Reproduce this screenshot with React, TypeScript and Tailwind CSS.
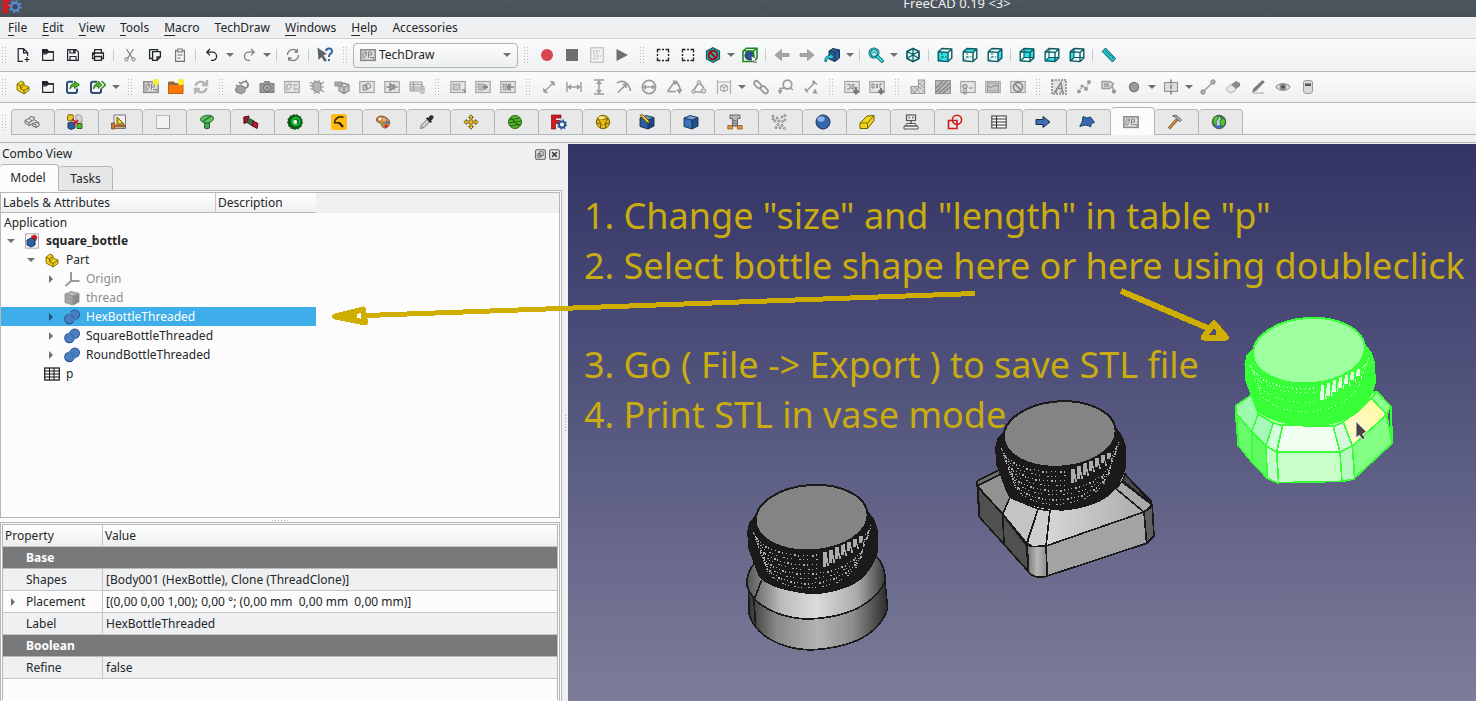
import { ReactNode } from "react";

const DARK = "#232629";
const GREY = "#9a9a9a";
const TEAL = "#0f5a60";
const CYAN = "#2fe0e4";

function Svg({ children, size = 16 }: { children: ReactNode; size?: number }) {
  return (
    <svg width={size} height={size} viewBox="0 0 16 16" fill="none" aria-hidden="true" className="shrink-0">
      {children}
    </svg>
  );
}

const isoCube = "M8 1.5 14 4.5V11.5L8 14.5 2 11.5V4.5Z";

function Cube({ top, left, right, line }: { top: string; left: string; right: string; line: string }) {
  return (
    <>
      <path d="M1 4 7 1.5 15 3.5 9 6Z" fill={top} />
      <path d="M1 4 9 6V15L1 12.5Z" fill={left} />
      <path d="M9 6 15 3.5V12L9 15Z" fill={right} />
      <path d="M1 4 7 1.5 15 3.5V12L9 15 1 12.5ZM1 4 9 6 15 3.5M9 6V15" stroke={line} strokeWidth="0.9" strokeLinejoin="round" />
    </>
  );
}

function ViewCube({ face, hidden }: { face: string; hidden?: boolean }) {
  return (
    <>
      <path d="M1 4.5 5 1.5H15V11L11 14.5H1Z" fill="#eafcfc" />
      <path d={face} fill={CYAN} />
      <path d="M1.2 4.8 5 1.5 14.8 2V11L11 14.6 1.2 13.8ZM1.2 4.8 11 5.4V14.6M11 5.4 14.8 2" stroke={TEAL} strokeWidth="1.4" strokeLinejoin="round" />
      {hidden && <path d="M5 2V10.5H14.5M5 10.5 1.5 14" stroke={TEAL} strokeWidth="1.1" />}
      {!hidden && <path d="M5 6V10L2.5 13M5 10H9.5" stroke={TEAL} strokeWidth="0.9" strokeDasharray="2 1" />}
    </>
  );
}

function Page({ children }: { children?: ReactNode }) {
  return (
    <>
      <rect x="0.8" y="2.5" width="14.4" height="11" fill="#e6e6e6" stroke="#a3a3a3" strokeWidth="1.2" />
      {children}
    </>
  );
}

const techDraw = (
  <>
    <rect x="0.8" y="2.8" width="14.4" height="10.6" fill="#dedede" stroke="#8a8a8a" strokeWidth="1.5" />
    <path d="M3 11.5V6L4.5 4.8 6.5 5.2V7.5L4 11.5M6.5 5.2 4.5 7.5M8.5 11V5H11.5V8H8.5M10 10.5H13.5V12" stroke="#707070" strokeWidth="0.8" />
  </>
);

const yellowPart = (
  <>
    <path d="M2 5 6 2 9 3.5V6L14 8V11.5L9 15 2 11Z" fill="#f0cf1d" stroke="#6e5a00" strokeWidth="0.8" />
    <path d="M2 5 5.5 7 9 4.5M5.5 7V9.5L9 11.5 14 8.5M9 11.5V15M5.5 9.5 8.5 7" stroke="#6e5a00" strokeWidth="0.9" />
  </>
);

const icons: Record<string, ReactNode> = {
  // file
  new: <path d="M8 14.3H3.2V1.7H8.5L12.6 5.8V9M8.5 1.7V5.8H12.6M12 10V15M9.5 12.5H14.5" stroke={DARK} strokeWidth="1.2" />,
  open: (
    <>
      <path d="M2.6 13.4V2.6H7L8.5 4.6H13.4V13.4ZM2.6 7H6L8 4.8" stroke={DARK} strokeWidth="1.1" />
      <path d="M2 2.5H7L8.5 4.5H14V5.8H8.5L7 6.4H2Z" fill={DARK} />
    </>
  ),
  save: (
    <>
      <path d="M2.6 2.6H11L13.4 5V13.4H2.6Z" stroke={DARK} strokeWidth="1.2" />
      <path d="M5 2.5V6H10V2.5M5 13V9.5H11V13" stroke={DARK} strokeWidth="1.2" />
      <path d="M8 3H10V6H8Z" fill={DARK} />
    </>
  ),
  print: <path d="M4.6 5.5V2.6H11.4V5.5M4.6 11.5H2.6V6H13.4V11.5H11.4M4.6 9.5H11.4V13.4H4.6ZM3 7.5H5" stroke={DARK} strokeWidth="1.3" />,
  cut: (
    <>
      <path d="M4.5 2 10.5 11.5M11.5 2 5.5 11.5" stroke="#777" strokeWidth="1.1" />
      <circle cx="4.5" cy="12.3" r="1.6" stroke="#777" />
      <circle cx="11.5" cy="12.3" r="1.6" stroke="#777" />
    </>
  ),
  copy: <path d="M5 11.5H2.6V2.6H10.5V4M5.6 4.6H13.4V10L10 13.4H5.6ZM13.4 10H10V13.4" stroke={DARK} strokeWidth="1.3" />,
  paste: <path d="M5 3.6H3.6V14.4H12.4V3.6H11M5.8 2H10.2V5H5.8ZM5.5 8H10.5M5.5 11H8.5" stroke="#6c6c6c" strokeWidth="1.1" />,
  undo: <path d="M6 2 2.8 5.2 6 8.4M3 5.2H8.5A4 4 0 0 1 8.5 13.4H7" stroke={DARK} strokeWidth="1.3" />,
  redo: <path d="M10 2 13.2 5.2 10 8.4M13 5.2H7.5A4 4 0 0 0 7.5 13.4H9" stroke="#808080" strokeWidth="1.3" />,
  refresh: <path d="M2.5 8A5.5 5.5 0 0 1 12 4.2M13.5 8A5.5 5.5 0 0 1 4 11.8M12.4 2V5H9.5M3.6 14V11H6.5" stroke="#808080" strokeWidth="1.3" />,
  whats: (
    <>
      <path d="M0.5 0.5 10 7 6.5 8.2 10 13.5 7.5 14.8 4.5 10 1.5 13Z" fill="#5d6468" />
      <path d="M9 4A3 2.8 0 1 1 13 7C12 7.6 12 8.5 12 10M12 12V14" stroke="#2f64a5" strokeWidth="2" />
    </>
  ),
  // macro
  record: <circle cx="8" cy="8" r="6" fill="#da4453" />,
  stop: <rect x="2" y="2" width="12" height="12" fill="#6d706e" />,
  macro: (
    <>
      <rect x="1.8" y="0.8" width="12.4" height="14.4" fill="#f2f2f2" stroke="#b4b4b4" />
      <path d="M4 4H11M4 6.5H9M5 9H12M4 11.5H10" stroke="#c4c4c4" strokeWidth="1.4" strokeDasharray="2 1" />
    </>
  ),
  play: <path d="M2.5 2 14 8 2.5 14Z" fill="#6d706e" />,
  // view
  box: <path d="M2.5 5.5V2.5H5.5M7 2.5H9M10.5 2.5H13.5V5.5M13.5 7V9M13.5 10.5V13.5H10.5M9 13.5H7M5.5 13.5H2.5V10.5M2.5 9V7" stroke={DARK} strokeWidth="1.4" />,
  drawStyle: (
    <>
      <path d="M8 0.8 14.5 4.2V11.8L8 15.2 1.5 11.8V4.2Z" fill="#24b8bd" stroke={TEAL} strokeWidth="1.2" />
      <circle cx="8" cy="8" r="4.3" stroke="#a30d12" strokeWidth="2" />
      <path d="M5 5 11 11" stroke="#a30d12" strokeWidth="2" />
    </>
  ),
  bound: (
    <>
      <circle cx="7.5" cy="8.5" r="4.5" fill="#2a5298" stroke="#152b52" />
      <path d="M1 4 4.5 1.2H15V11L11.5 14.5H1ZM1 4H11.5V14.5M11.5 4 15 1.2" stroke="#188a1c" strokeWidth="1.6" />
      <path d="M9 9 15 12 12.8 13 14.5 15.5 13 16 11.5 13.8 9.8 15Z" fill="#fff" stroke="#333" strokeWidth="0.6" />
    </>
  ),
  back: <path d="M1 8 7.5 2.5V6.5H15V9.5H7.5V13.5Z" fill="#a5a5a5" stroke="#8c8c8c" strokeWidth="0.7" />,
  fwd: <path d="M15 8 8.5 2.5V6.5H1V9.5H8.5V13.5Z" fill="#a5a5a5" stroke="#8c8c8c" strokeWidth="0.7" />,
  link: (
    <>
      <path d="M5 4 9 1.5 15.5 3V11L11 14.5 5 12Z" fill="#2d5c9c" stroke="#172e55" />
      <path d="M5 4 11 5.5 15.5 3M11 5.5V14" stroke="#172e55" strokeWidth="0.8" />
      <path d="M0.8 14.5C0.8 10 3 8.5 6 8.5V6.5L10 9.8 6 13V11C4 11 2.5 12 2.5 14.5Z" fill="#2bc8cf" stroke={TEAL} strokeWidth="0.8" />
    </>
  ),
  zoom: (
    <>
      <circle cx="6" cy="6" r="4.2" fill="#9ff2f4" stroke={TEAL} strokeWidth="2.6" />
      <circle cx="6" cy="6" r="4.2" stroke={CYAN} strokeWidth="1.1" />
      <path d="M4 6.5 6 4.5 8 6.5" stroke={TEAL} />
      <path d="M9.5 9.5 14 14" stroke={TEAL} strokeWidth="3.6" strokeLinecap="round" />
      <path d="M9.5 9.5 14 14" stroke={CYAN} strokeWidth="2" strokeLinecap="round" />
    </>
  ),
  iso: (
    <>
      <path d={isoCube} fill="#d9f8f8" stroke={TEAL} strokeWidth="1.7" />
      <path d="M2 4.5 8 7.5 14 4.5M8 7.5V14.5M8 1.5V7.5M8 8 2.5 11M8 8 13.5 11" stroke={TEAL} strokeWidth="1.2" />
    </>
  ),
  front: <ViewCube face="M1 5H11V14.5H1Z" />,
  top: <ViewCube face="M1 4.8 5 1.5H15L11 4.8Z" />,
  right: <ViewCube face="M11 4.8 15 1.5V11L11 14.5Z" />,
  rear: <ViewCube hidden face="M5 1.5H15V10.5H5Z" />,
  bottom: <ViewCube hidden face="M1 14.5 5 10.5H15L11 14.5Z" />,
  left: <ViewCube hidden face="M1 4.8 5 1.5V10.5L1 14.5Z" />,
  measure: (
    <>
      <path d="M4.5 1 14.5 11.5 11.5 15 1.2 4.5Z" fill="#1fbfca" stroke={TEAL} />
      <path d="M6 4 5 5.2M8 6 7 7.2M10 8 9 9.2M12 10 11 11.2" stroke={TEAL} />
    </>
  ),
  // structure
  part: yellowPart,
  linkMake: (
    <>
      <path d="M8 2.8H4Q2 2.8 2 4.8V12Q2 14 4 14H10Q12 14 12 12V9.5" stroke="#2d4c70" strokeWidth="2" />
      <path d="M5 10C5 6 7 4.5 9.5 4.5V2L14.5 5.8 9.5 9.5V7C7.5 7 6 8 5 10Z" fill="#4fb52c" stroke="#20630c" strokeWidth="0.8" />
    </>
  ),
  linkMulti: (
    <>
      <path d="M7 2.8H3Q1 2.8 1 4.8V12Q1 14 3 14H9Q11 14 11 12V9.5" stroke="#2d4c70" strokeWidth="2" />
      <path d="M3.5 10C3.5 6 5.5 4.5 8 4.5V2L12 5.8 8 9.5V7C6 7 4.5 8 3.5 10Z" fill="#4fb52c" stroke="#20630c" strokeWidth="0.8" />
      <path d="M11.5 2 15.5 5.8 11.5 9.5" stroke="#3f8c22" strokeWidth="1.6" />
    </>
  ),
  // techdraw
  pageNew: (
    <>
      {techDraw}
      <circle cx="13" cy="3" r="3.2" fill="#f6ee3c" />
    </>
  ),
  pageTemplate: (
    <>
      <path d="M0.5 3H6L7.5 4.5H15V14.5H0.5Z" fill="#f57900" stroke="#ce5c00" />
      <path d="M0.5 3H6L7.5 4.5H11L9.5 6H0.5Z" fill="#8c6a52" />
      <circle cx="13" cy="3" r="3.2" fill="#f6ee3c" />
    </>
  ),
  redraw: <path d="M2.5 7A5.5 5 0 0 1 12.5 5M13.5 9A5.5 5 0 0 1 3.5 11M14 1V6H9M2 15V10H7" stroke="#b6b6b6" strokeWidth="2.4" />,
  view: (
    <>
      <path d="M2 9 6 6 11 8V13L7 15 2 13Z" fill="#a0a0a0" stroke="#858585" />
      <path d="M7 5 9 3 12 2.5 14 4.5 13.5 8 11 9.5M5 3 7 5M12 1 12.5 3M15 6 13 6.5M2 6 4 7.5M1 11H3" stroke="#858585" strokeWidth="1.6" />
    </>
  ),
  camera: (
    <>
      <path d="M1 4.5H4.5L5.5 2.5H10.5L11.5 4.5H15V13.5H1Z" fill="#979797" stroke="#7c7c7c" />
      <circle cx="8" cy="8.8" r="3.4" fill="#bdbdbd" stroke="#636363" />
      <circle cx="8" cy="8.8" r="1.5" fill="#777" />
    </>
  ),
  tdPage: <Page><path d="M3 11.5V6L5 5H7V8L4 11.5M9 6H13M9 9H11V12M12 10H14" stroke={GREY} /></Page>,
  section: (
    <>
      <path d="M4 4 8 2.5 12 4V11L8 13.5 4 11Z" fill="#b4b4b4" stroke="#888" />
      <path d="M1 3 4 5M1 6 4 8M1 10 4 10M12 5 15 3M12 8 15 8M12 11 15 13M6 1V3M10 1V3M6 13V15M10 13V15" stroke="#999" strokeWidth="1.2" />
    </>
  ),
  detail: (
    <>
      <path d="M5 6 10 4 15 6V12L10 14.5 5 12ZM5 6 10 8 15 6M10 8V14.5" fill="#bfbfbf" stroke="#8c8c8c" strokeWidth="1.2" />
      <path d="M1 3H8V7H1Z" fill="#a8a8a8" stroke="#8d8d8d" />
    </>
  ),
  draftView: <Page><path d="M4 6H8V11H4Z" fill="#ccc" stroke="#888" /><circle cx="9" cy="7" r="2.6" stroke="#888" /></Page>,
  archView: <Page><path d="M2.5 8H6M10 8H13.5M6 4.5 10.5 8 6 11.5ZM10 5V11" stroke="#888" strokeWidth="1.4" fill="#aaa" /></Page>,
  sheetView: <path d="M1 3H13V12H1ZM1 5.5H13M1 8H13M1 10H13M4.5 3V12M13 6 15 8V14H11" fill="#ececec" stroke={GREY} />,
  clip: <Page><path d="M3 5H10V11H3Z" fill="#c6c6c6" stroke="#888" strokeDasharray="1.5 1" /><path d="M12 11H15V14" stroke="#777" /></Page>,
  clipAdd: <Page><path d="M3 5H9V11H3Z" fill="#bbb" stroke="#888" strokeDasharray="1.5 1" /><path d="M8 8H13M10.5 5.5V10.5" stroke="#888" strokeWidth="2" /></Page>,
  clipSub: <Page><path d="M3 5H9V11H3Z" fill="#bbb" stroke="#888" strokeDasharray="1.5 1" /><path d="M7 8 10 5.5V10.5ZM9 8H14" stroke="#888" strokeWidth="1.6" /></Page>,
  dimLen: <path d="M3.5 12.5 12.5 3.5M2 9.5 6.5 14M9.5 2 14 6.5M3 13V10M3 13H6M13 3V6M13 3H10" stroke={GREY} strokeWidth="1.4" />,
  dimH: <path d="M1 3V13M15 3V13M2 8H14M5 5.8 2.5 8 5 10.2M11 5.8 13.5 8 11 10.2" stroke={GREY} strokeWidth="1.4" />,
  dimV: <path d="M3 1H13M3 15H13M8 2V14M5.8 5 8 2.5 10.2 5M5.8 11 8 13.5 10.2 11" stroke={GREY} strokeWidth="1.5" />,
  dimR: <path d="M1 4C7 0 13 4 14.5 12M2 13.5 10 5.5M10 9V5.5H6.5" stroke={GREY} strokeWidth="1.7" />,
  dimD: <><circle cx="8" cy="8" r="6.6" stroke={GREY} strokeWidth="1.7" /><path d="M2.5 8H13.5M5 6 2.8 8 5 10M11 6 13.2 8 11 10" stroke={GREY} strokeWidth="1.4" /></>,
  dimAng: <path d="M1.5 12.5 8.5 3M1.5 12.5H10M9.5 3C13 5 14.5 8 13.5 13M7 2 12 3.5M9 5.5 10 1.5M15.5 10 13.5 13.5 11 10.5" stroke={GREY} strokeWidth="1.6" />,
  dim3: <><path d="M1.5 13 8 3 13 9M1.5 13H11" stroke={GREY} strokeWidth="1.6" /><circle cx="2.5" cy="12.5" r="1.8" fill="#d8d8d8" stroke={GREY} /><circle cx="8" cy="3.5" r="1.8" fill="#d8d8d8" stroke={GREY} /><circle cx="12.5" cy="12" r="2.3" fill="#d8d8d8" stroke={GREY} /></>,
  extent: <path d="M1.5 1V15M14.5 1V15M2 3H14M4.5 7 8 5.5 11.5 7V11L8 12.5 4.5 11ZM4.5 7 8 8.5 11.5 7M8 8.5V12.5" stroke="#adadad" strokeWidth="1.2" />,
  chain: <><rect x="0.5" y="3.2" width="8.5" height="4.6" rx="2.3" transform="rotate(45 4.7 5.5)" stroke={GREY} strokeWidth="1.8" /><rect x="7" y="8.4" width="8.5" height="4.6" rx="2.3" transform="rotate(45 11.2 10.7)" stroke={GREY} strokeWidth="1.8" /></>,
  balloon: <><circle cx="9.5" cy="5.5" r="4.3" stroke={GREY} strokeWidth="1.7" /><path d="M6.5 9 2 9.5V14M0.5 11 2 14 4 11M12 9 15 11" stroke={GREY} strokeWidth="1.4" /></>,
  axo: <><path d="M3 12.5 12 3.5M1.5 10 5 13.5M10 1.5 14 5.5M3 12.5V9.5M12 3.5H9" stroke={GREY} strokeWidth="1.4" /><path d="M9.5 14.5 12 9.5 14.5 14.5Z" fill={GREY} /></>,
  exportSvg: <><Page /><path d="M3 5.5H6V10H3M8 5.5H10V10H8Z" stroke="#888" /><path d="M12 8V14M9.5 11.5 12 14.5 14.5 11.5" stroke="#777" strokeWidth="2" /></>,
  exportDxf: <><Page /><path d="M3 5V9H5V5ZM7 5 9 9M9 5 7 9M11 9V5H13" stroke="#888" /><path d="M12 9V14M9.5 11.5 12 14.5 14.5 11.5" stroke="#777" strokeWidth="2" /></>,
  hatch: <><path d="M8.5 1H14.5V14.5H1V7.5H8.5Z" fill="#ddd" stroke={GREY} strokeWidth="1.2" /><path d="M1 10 5.5 14.5M4 7.5 11 14.5M8.5 7.5 14.5 13.5M8.5 3.5 14.5 9.5M5 8 1.5 12M9 8 3 14M14 4 5 14M13 1.5 8.5 6" stroke="#a5a5a5" /></>,
  geoHatch: <><rect x="0.6" y="1.6" width="14.8" height="13" fill="#bdbdbd" stroke="#8c8c8c" /><path d="M1 9 8 2M1 13 12 2M4 14 15 4M8 14 15 8" stroke="#848484" strokeWidth="1.5" /></>,
  symbol: <Page><circle cx="5" cy="7.5" r="2.2" fill="#ccc" stroke="#888" /><path d="M3.8 9.5V15H6.2V9.5M9 9H13" stroke="#888" /></Page>,
  image: <Page><rect x="2.5" y="4" width="11" height="8" fill="#c5c5c5" stroke="#999" /><path d="M3 7 6 8.5 9 6.5 13 7" stroke="#8a8a8a" /></Page>,
  toggleFrame: <Page><circle cx="8" cy="8" r="4.6" fill="#ddd" stroke="#868686" strokeWidth="1.7" /><path d="M5 5 11 11" stroke="#868686" strokeWidth="1.7" /></Page>,
  anno: <><rect x="1" y="1" width="14" height="14" fill="#e2e2e2" stroke="#888" strokeWidth="1.6" strokeDasharray="2 1" /><path d="M4 13 10 3.5 11.5 13M6 9.5H11M3 13H6M9.5 13H13" stroke="#858585" strokeWidth="1.5" /></>,
  leader: <><path d="M3 12 7 7 10 10 13 3" stroke={GREY} strokeWidth="1.2" strokeDasharray="1.5 1" /><circle cx="3" cy="12.5" r="2" fill={GREY} /><circle cx="6" cy="7" r="1.6" fill={GREY} /><circle cx="10" cy="10" r="2" fill={GREY} /><circle cx="13" cy="3" r="2" fill={GREY} /></>,
  rich: <><path d="M1 2.5H9L12.5 5 9 9.5H1Z" fill="#ddd" stroke={GREY} strokeWidth="1.4" /><path d="M3 5H8M3 7H8M11 7 13 12" stroke={GREY} strokeWidth="1.3" /><circle cx="13" cy="12.5" r="2.2" fill={GREY} /></>,
  vertex: <circle cx="8" cy="8" r="4.6" fill="#9b9b9b" stroke="#747474" strokeWidth="1.2" />,
  centerline: <><rect x="1.5" y="3.5" width="13" height="9" fill="#dcdcdc" stroke="#999" strokeWidth="1.2" /><path d="M8 0.5V15.5" stroke="#777" strokeWidth="1.4" strokeDasharray="4 1.5" /></>,
  line: <><path d="M3 13 13 3" stroke="#9a9a9a" strokeWidth="1.4" /><circle cx="3" cy="13" r="2.2" fill="#b2b2b2" stroke="#888" /><circle cx="13" cy="3" r="2.2" fill="#b2b2b2" stroke="#888" /></>,
  erase: <><path d="M1.5 9 6 5.5 10.5 9V11.5L6 14 1.5 11.5Z" fill="#e6e6e6" stroke="#b4b4b4" /><path d="M6 5.5 11 2 15 4V7L10.5 10.5V9Z" fill="#8b8b8b" /></>,
  pencil: <><path d="M2 13.5 3.5 9.5 12.5 1 14.8 3 6 12Z" fill="#7d7d7d" /><path d="M2.5 14H14" stroke="#bbb" strokeWidth="1.4" /></>,
  eye: <><path d="M1 8C4 3.5 12 3.5 15 8 12 12.5 4 12.5 1 8Z" fill="#e2e2e2" stroke="#999" strokeWidth="1.2" /><circle cx="8" cy="8" r="3.3" fill="#8b8b8b" /><circle cx="8" cy="8" r="1.4" fill="#444" /></>,
  weld: <><rect x="3.5" y="1.5" width="9" height="13" rx="2.5" fill="#d8d8d8" stroke="#9a9a9a" /><rect x="5" y="4.5" width="6" height="2.5" fill="#555" /></>,
  // workbenches
  arch: <path d="M1 9V6.5L5 4.5 6.5 2.5 10.5 3.5 10 5.5 13 7.5 15 9V12L12 13.5 8.5 12 8 10 5 11.5ZM1 6.5 5 8.5 8 7 5 4.5M5 8.5V11.5M8 7 10 5.5M8 10 11 8.5 15 9M12 13.5V11L8.5 9.5" fill="#e4e4e4" stroke="#5f5f5f" strokeWidth="0.9" />,
  assembly: <><rect x="0.5" y="0.8" width="6" height="6" rx="1.5" fill="#e6c62d" stroke="#806600" /><path d="M9 1H13L15 3V8H9Z" fill="#d5d5d5" stroke="#999" /><path d="M1 9 4 8 8 9V14L4 15.5 1 14Z" fill="#2f5f9e" stroke="#193660" /><path d="M10 9.5H15V14.5H10Z" fill="#56b030" stroke="#2b6a12" /><path d="M5 5 11 10M11 6 6 11" stroke="#c4161c" strokeWidth="1.6" /></>,
  draft: <><path d="M3 1H14.5V14.5H3Z" fill="#f0f0f0" stroke="#777" /><path d="M6 10V3L13 10Z" fill="#e8bf16" stroke="#745f00" /><path d="M8 8.5V7L9.5 8.5Z" fill="#f0f0f0" /><path d="M0.5 9H3.5V11H14V13H3.5V15H0.5Z" fill="#c9752d" stroke="#6a3c12" strokeWidth="0.7" /></>,
  blank: <><rect x="1.5" y="1.5" width="13" height="13" fill="#f2f2f2" stroke="#bdbdbd" /><path d="M2 14.5H14.5V2" stroke="#999" /></>,
  fastener: <><path d="M1.5 5.5C1 1 14 -0.5 14.5 4 14.5 7 11 9 8 9S1.5 8 1.5 5.5Z" fill="#5fbf67" stroke="#226b2a" /><path d="M5.5 9H10.5V14Q8 15.5 5.5 14Z" fill="#4aa552" stroke="#226b2a" /><path d="M4 7.5 12 2" stroke="#226b2a" strokeWidth="1.2" /></>,
  flamingo: <><path d="M0.8 3 6 2 5 8 1 9.5Z" fill="#a8172b" stroke="#590c17" /><path d="M5 4 11 7 9.5 12 4 8.5Z" fill="#3d6a4e" stroke="#243f2d" /><path d="M10 7 15 9.5 14 14.5 9.5 12Z" fill="#c41a30" stroke="#590c17" /></>,
  gears: <><circle cx="8" cy="8" r="4.8" stroke="#0b5a16" strokeWidth="5" /><circle cx="9" cy="7.5" r="3.8" stroke="#17b82d" strokeWidth="2.4" /><circle cx="8" cy="8" r="6.6" stroke="#0b5a16" strokeWidth="2.4" strokeDasharray="1.8 1.4" /></>,
  inspect: <><rect width="16" height="16" rx="2.5" fill="#ffbc0f" /><path d="M12.5 3.5C8 1.5 3.5 4.5 3.5 9.5M3.5 8.5 8.5 9" stroke="#2b2108" strokeWidth="1.5" /><path d="M8 8.5 12 13" stroke="#2b2108" strokeWidth="2.2" /></>,
  material: <><path d="M1.5 6C1 2 7 1 11 3.5 15 6 16 10 12.5 13 9 15.5 7 13 6.5 10.5 6 8 2 9.5 1.5 6Z" fill="#d78d4c" stroke="#7d4a1c" /><circle cx="5" cy="5" r="1.3" fill="#fff" /><circle cx="9" cy="5.5" r="1.3" fill="#c7c7c7" /><circle cx="12" cy="8.5" r="1.6" fill="#3a74c4" /><circle cx="8.5" cy="9.5" r="1.3" fill="#4faf2e" /><circle cx="11" cy="12" r="1.6" fill="#d21f26" /></>,
  dropper: <><path d="M1.5 14.5 2.5 11 8 5.5 10.5 8 5 13.5Z" fill="#d2d2d2" stroke="#777" /><path d="M7 4.5 11.5 9 13 7.5 12 6.5C16 4.5 15 0.5 11.5 1.5 10 2 10 3.5 9.5 4L8.5 3Z" fill="#2d2d2d" /></>,
  manip: <path d="M8 0.8 10.5 3.5H9V7H12.5V5.5L15.2 8 12.5 10.5V9H9V12.5H10.5L8 15.2 5.5 12.5H7V9H3.5V10.5L0.8 8 3.5 5.5V7H7V3.5H5.5Z" fill="#f3c92c" stroke="#6b5512" strokeWidth="0.9" />,
  meshGreen: <><circle cx="8" cy="8" r="6.5" fill="#5cb530" stroke="#246a08" /><path d="M2 6 13 4M2 9 14 7M3 12 14 10M4 4 12 12" stroke="#246a08" strokeWidth="1.1" /></>,
  freecad: <><path d="M0.5 1H10V4H4.5V6.5H8.5V9.5H4.5V15H0.5Z" fill="#d6181f" stroke="#750b0f" strokeWidth="0.7" /><circle cx="11" cy="10.5" r="3" fill="#fff" stroke="#2a5596" strokeWidth="2" /><circle cx="11" cy="10.5" r="4.5" stroke="#2a5596" strokeWidth="1.3" strokeDasharray="1.6 1.9" /></>,
  freecadLight: <><path d="M0.5 1H8V4H4.5V6.5H7V9.5H4.5V14H0.5Z" fill="#d6181f" /><circle cx="10.5" cy="8.5" r="3" fill="#3c4a5c" stroke="#5c8fd6" strokeWidth="1.6" /><circle cx="10.5" cy="8.5" r="4.5" stroke="#5c8fd6" strokeWidth="1.4" strokeDasharray="1.6 1.9" /></>,
  openscad: <><circle cx="8" cy="8" r="6.7" fill="#e0b91c" stroke="#7a5f00" /><path d="M3 4.5Q8 6 13 4.5 9 9 10.5 14M3 4.5Q7 9 5.5 14M2 9 6.5 10.5M14 9 9.5 10.5" stroke="#7a5f00" /><ellipse cx="6.5" cy="3.8" rx="3" ry="1.5" fill="#f8e88a" /></>,
  partDesign: <><Cube top="#6a9bd8" left="#2a5da0" right="#1d4780" line="#142c50" /><path d="M1 1.5 3.5 0.5 10 7 10.5 9.5 8 8.5Z" fill="#f2cf2b" stroke="#4c3d00" strokeWidth="0.8" /></>,
  partWb: <Cube top="#77a5df" left="#3a70b8" right="#234f8c" line="#142c50" />,
  screw: <><path d="M3 1H13V4.5H10.5V12H5.5V4.5H3Z" fill="#b7b7b7" stroke="#666" /><path d="M5.5 6 10.5 7.5M5.5 8.5 10.5 10M5.5 11 10.5 12" stroke="#666" /><path d="M0.8 11.5H5.5V15H0.8ZM10.5 11.5H15.2V15H10.5Z" fill="#e3953e" stroke="#85500f" strokeWidth="0.7" /></>,
  points: (
    <g fill="#f4f4f4" stroke="#737373" strokeWidth="0.9">
      {[[2, 2], [6, 4], [11, 3], [14, 1.5], [4, 7], [8, 7], [11.5, 7.5], [14, 6], [7, 10.5], [11, 11.5], [5, 13.5], [9, 14], [13.5, 14.5], [2, 5]].map(([x, y]) => (
        <circle key={`${x}-${y}`} cx={x} cy={y} r="1" />
      ))}
    </g>
  ),
  raytrace: <><circle cx="8" cy="8" r="7" fill="#3468ac" stroke="#152c50" /><ellipse cx="6" cy="5" rx="3.6" ry="2.8" fill="#8ab2e4" /></>,
  reverse: <><path d="M1 9 8 2 15 1.5V6.5L8.5 14.5 1 14.5Z" fill="#f0d71c" stroke="#6d5d00" /><path d="M1 9H8.5L15 1.5M8.5 9V14.5" stroke="#6d5d00" strokeWidth="0.9" /></>,
  robot: <><rect x="3.5" y="1" width="9" height="5.5" fill="#eee" stroke="#555" strokeWidth="1.2" /><path d="M5.5 3.5H7M9 3.5H10.5M8 6.5V9.5" stroke="#555" strokeWidth="1.4" /><path d="M3.5 9.5H12.5L13.5 12H2.5ZM1 12H15V15H1Z" fill="#f2f2f2" stroke="#555" /></>,
  sketch: <><circle cx="10" cy="5.8" r="4.6" stroke="#cf1d1d" strokeWidth="1.6" /><path d="M1.5 6.5H10V14.5H1.5Z" stroke="#cf1d1d" strokeWidth="1.6" /></>,
  sheet: <><rect x="0.8" y="2" width="14.4" height="12" fill="#fff" stroke="#333" /><path d="M1 5H15M1 8H15M1 11H15M5.5 2V14" stroke="#333" strokeWidth="1.1" /></>,
  start: <path d="M1 5.5H8V2.5L15 8 8 13.5V10.5H1Z" fill="#3d70b5" stroke="#152c50" />,
  surface: <path d="M4 2.5Q8 5 11.5 3L15.5 8.5Q12 8.5 11.5 13 8 9.5 0.8 12.5 4 8 4 2.5Z" fill="#3768ac" stroke="#1a3b6b" />,
  techDraw,
  hammer: <><path d="M2 14.5 10.5 5" stroke="#714312" strokeWidth="2.8" /><path d="M2 14.5 10.5 5" stroke="#dc9847" strokeWidth="1.5" /><path d="M5.5 2Q9 0 11 2.5L14.5 6 12.8 7.8 10 5Q9 2.8 5.5 2Z" fill="#a8adaa" stroke="#555" strokeWidth="0.8" /></>,
  web: <><circle cx="8" cy="8" r="6.8" fill="#3c6cb4" stroke="#4d5f73" /><circle cx="7" cy="7" r="4.5" fill="#b4d0f0" /><path d="M2.5 4Q5 1 8 2L7 5 5 7 5.5 10 4 12 2 8ZM9 6 13.5 4 14.5 8 12 13 9.5 11ZM9 2 12 3 10 4.5Z" fill="#5cc42c" stroke="#236008" strokeWidth="0.7" /></>,
  // tree
  doc: <><path d="M1.5 0.8H14.5V15.2H1.5Z" fill="#f4f4f4" stroke="#aaa" /><path d="M7 3 11 1.5 13.5 4 12 8 8 7Z" fill="#d31a20" /><path d="M3 7 7 5 11 6.5V12L7 14 3 12Z" fill="#2d61a5" stroke="#142c50" strokeWidth="0.9" /></>,
  origin: <path d="M7 1V10H15.5M7 10 1.5 15" stroke="#999" strokeWidth="2" />,
  cubeGrey: <Cube top="#b8b8b8" left="#a4a4a4" right="#8a8a8a" line="#8e8e8e" />,
  fusion: (
    <>
      <g stroke="#204781" strokeWidth="1.6">
        <circle cx="5.4" cy="10" r="4.4" />
        <circle cx="10.8" cy="5.6" r="4.4" />
      </g>
      <g fill="#4a7ec2">
        <circle cx="5.4" cy="10" r="4.4" />
        <circle cx="10.8" cy="5.6" r="4.4" />
        <path d="M2.500 6.500 7 2.500 13.500 9 9 13Z" />
      </g>
      <path d="M6.2 6Q9.5 6.500 9.8 9.8" stroke="#2c5896" strokeWidth="0.8" />
    </>
  ),
  spreadsheet: <><rect x="0.7" y="2" width="14.6" height="12" fill="#fff" stroke="#111" strokeWidth="1.2" /><path d="M1 5H15M1 8H15M1 11H15M5.5 2V14M10 2V14" stroke="#111" /></>,
};

// "|" separator, ":" drag handle, "v" menu arrow, anything else is an icon
const fileBar = ["new", "open", "save", "print", "|", "cut", "copy", "paste", "|", "undo", "v", "redo", "v", "|", "refresh", "|", "whats", ":"];
const viewBar = [":", "record", "stop", "macro", "play", ":", "box", "box", "drawStyle", "v", "bound", "|", "back", "fwd", "link", "v", "|", "zoom", "v", "iso", "|", "front", "top", "right", "|", "rear", "bottom", "left", "|", "measure"];
const drawBar = [
  "part", "open", "linkMake", "linkMulti", "v", ":", "pageNew", "pageTemplate", "redraw", ":",
  "view", "camera", "tdPage", "section", "detail", "draftView", "archView", "sheetView", ":",
  "clip", "clipAdd", "clipSub", ":", "dimLen", "dimH", "dimV", "dimR", "dimD", "dimAng", "dim3", "extent", "v", "chain", "balloon", "axo", ":",
  "exportSvg", "exportDxf", ":", "hatch", "geoHatch", "symbol", "image", "toggleFrame", ":",
  "anno", "leader", "rich", "vertex", "v", "centerline", "v", "line", "erase", "pencil", "eye", "weld",
];
const workbenches = [
  "arch", "assembly", "draft", "blank", "fastener", "flamingo", "gears", "inspect", "material", "dropper", "manip", "meshGreen", "freecad", "openscad",
  "partDesign", "partWb", "screw", "points", "raytrace", "reverse", "robot", "sketch", "sheet", "start", "surface", "techDraw", "hammer", "web",
];

const menus = ["File", "Edit", "View", "Tools", "Macro", "TechDraw", "Windows", "Help", "Accessories"];
const noMnemonic = ["TechDraw", "Accessories"];

const tree = [
  { label: "Part", icon: "part", pad: "pl-6", arrow: "down" },
  { label: "Origin", icon: "origin", pad: "pl-11", arrow: "right", muted: true },
  { label: "thread", icon: "cubeGrey", pad: "pl-11", muted: true },
  { label: "HexBottleThreaded", icon: "fusion", pad: "pl-11", arrow: "right", selected: true },
  { label: "SquareBottleThreaded", icon: "fusion", pad: "pl-11", arrow: "right" },
  { label: "RoundBottleThreaded", icon: "fusion", pad: "pl-11", arrow: "right" },
  { label: "p", icon: "spreadsheet", pad: "pl-6" },
];

const properties = [
  { group: "Base" },
  { name: "Shapes", value: "[Body001 (HexBottle), Clone (ThreadClone)]" },
  { name: "Placement", value: "[(0,00 0,00 1,00); 0,00 °; (0,00 mm  0,00 mm  0,00 mm)]", expandable: true },
  { name: "Label", value: "HexBottleThreaded" },
  { group: "Boolean" },
  { name: "Refine", value: "false" },
];

function Arrow({ dir, color = "#6e7173" }: { dir?: string; color?: string }) {
  return (
    <svg width="8" height="8" viewBox="0 0 8 8" aria-hidden="true" className="shrink-0">
      {dir === "down" && <path d="M0 2H8L4 6Z" fill={color} />}
      {dir === "right" && <path d="M2 0 6 4 2 8Z" fill={color} />}
    </svg>
  );
}

function Handle() {
  return (
    <span className="flex h-6 w-4 shrink-0 items-center justify-center">
      <svg width="5" height="16" viewBox="0 0 5 16" fill="#b9bcbe" shapeRendering="crispEdges" aria-hidden="true">
        {[0, 3, 6, 9, 12, 15].map(y => (
          <path key={y} d={`M0 ${y}h1v1h-1zM3 ${y}h1v1h-1z`} />
        ))}
      </svg>
    </span>
  );
}

function Tools({ items }: { items: string[] }) {
  return (
    <>
      {items.map((name, i) => {
        if (name === "|") return <span key={i} className="mx-[3px] h-3 w-px shrink-0 bg-[#c9cccd]" />;
        if (name === ":") return <Handle key={i} />;
        if (name === "v")
          return (
            <button key={i} aria-label="More" className="flex h-6 w-3 shrink-0 items-center justify-center">
              <Arrow dir="down" />
            </button>
          );
        return (
          <button key={i} aria-label={name} className="flex h-6 w-[25px] shrink-0 items-center justify-center hover:bg-sky-100">
            <Svg>{icons[name]}</Svg>
          </button>
        );
      })}
    </>
  );
}

type CapColors = { line: string; top: string; dot: string; sparse?: boolean };

// Threaded cap, drawn in a box where the lid is centred on 245,143
function Cap({ line, top, dot, sparse }: CapColors) {
  const dots: ReactNode[] = [];
  for (let row = 0; row < 8; row++) {
    if (sparse && (row === 2 || row === 4 || row > 5)) continue;
    const n = 42;
    for (let i = 2; i < n - 1; i++) {
      const a = (i / n) * Math.PI;
      const x = 245 - Math.cos(a) * (178 - row * 5);
      const y = 162 + row * 14 + Math.sin(a) * 92 + Math.cos(a) * 10;
      if (row < 4 && x > 266 && x < 400) continue;
      const s = (i * 7 + row * 5) % 4;
      if (s === 0 && row % 2) continue;
      dots.push(<rect key={`${row}-${i}`} x={Math.round(x)} y={Math.round(y)} width={s > 2 && !sparse ? 6 : 3} height={s > 1 && row % 2 === 0 ? 6 : 3} />);
    }
  }
  return (
    <g>
      <path d="M76 140 60 158 54 185 57 235 72 275 88 318Q120 358 250 371 350 362 395 323 430 290 443 240L441 180 430 148 412 125Z" fill={line} />
      <g fill={dot} stroke="none">
        {dots}
        {[0, 1, 2, 3, 4, 5, 6].map(i => (
          <path key={i} d={`M${280 + i * 18} ${247 - i * 8}h11l-2 ${44 - i * 4}h-10zM${292 + i * 18} ${262 - i * 8}l6 ${26 - i * 2}h-6z`} />
        ))}
      </g>
      <ellipse cx="245" cy="143" rx="168" ry="98" transform="rotate(-4 245 143)" fill={top} stroke={line} strokeWidth="6" />
    </g>
  );
}

const greyCap: CapColors = { line: "#1a1a1a", top: "#848484", dot: "#acacac" };
const greenCap: CapColors = { line: "#38ff38", top: "#9dff9d", dot: "#dcffdc", sparse: true };

function Scene() {
  return (
    <svg width="908" height="557" viewBox="0 0 908 557" className="absolute left-0 top-0" shapeRendering="crispEdges" aria-hidden="true">
      <defs>
        <linearGradient id="round">
          <stop offset="0" stopColor="#333" />
          <stop offset="0.2" stopColor="#888" />
          <stop offset="0.5" stopColor="#b4b4b4" />
          <stop offset="0.75" stopColor="#8d8d8d" />
          <stop offset="1" stopColor="#2c2c2c" />
        </linearGradient>
        <linearGradient id="cone">
          <stop offset="0" stopColor="#555" />
          <stop offset="0.25" stopColor="#bbb" />
          <stop offset="0.5" stopColor="#dcdcdc" />
          <stop offset="0.8" stopColor="#aaa" />
          <stop offset="1" stopColor="#3a3a3a" />
        </linearGradient>
        <linearGradient id="edge">
          <stop offset="0" stopColor="#777" />
          <stop offset="0.5" stopColor="#b8b8b8" />
          <stop offset="1" stopColor="#8a8a8a" />
        </linearGradient>
        <linearGradient id="shoulder" x1="0" y1="0.5" x2="1" y2="0.5">
          <stop offset="0.3" stopColor="#dedede" />
          <stop offset="1" stopColor="#a8a8a8" />
        </linearGradient>
        <linearGradient id="sunlit" x1="0" y1="1" x2="1" y2="0">
          <stop offset="0" stopColor="#fffbd8" />
          <stop offset="1" stopColor="#fff89a" />
        </linearGradient>
      </defs>

      <g transform="translate(162 326) scale(0.3333)" stroke="#1a1a1a" strokeWidth="5" strokeLinejoin="round">
        <path d="M55 355 58 435Q72 480 120 508 170 537 240 540 320 537 385 510 455 475 473 415L465 335 240 300Z" fill="url(#round)" />
        <path d="M75 278Q50 305 50 345 62 380 85 398 150 447 240 447 340 442 400 405 455 370 466 330 465 285 438 258Z" fill="url(#cone)" />
        <path d="M95 330 72 390 77 470" fill="none" />
        <Cap {...greyCap} />
      </g>

      <g transform="translate(392 246) scale(0.3333)" stroke="#1a1a1a" strokeWidth="5" strokeLinejoin="round">
        <path d="M52 285 57 380 132 463 205 545 200 468 128 372Z" fill="#505050" />
        <path d="M125 240 60 268 50 288 128 372 200 460 215 470H258L552 366 577 350 572 330 490 252 300 240Z" fill="url(#shoulder)" />
        <path d="M52 272 118 240 122 252 52 288Z" fill="#6e6e6e" />
        <path d="M52 288 122 252 150 322 128 372Z" fill="#929292" />
        <path d="M128 372 150 322 234 357 200 460Z" fill="#c4c4c4" />
        <path d="M202 458 234 357 270 362 258 468 215 470Z" fill="#cfcfcf" />
        <path d="M468 296 485 275 577 345 552 366Z" fill="#aaa" />
        <path d="M488 272 495 252 578 345Z" fill="#4b4b4b" />
        <path d="M202 465 215 470H258L262 558Q225 570 205 545Z" fill="url(#edge)" />
        <path d="M258 468 552 366 560 460 262 558Z" fill="#a3a3a3" />
        <path d="M552 366 577 350 582 438 560 460Z" fill="#606060" />
        <path d="M128 372 132 463M57 380 55 285" fill="none" />
        <g transform="translate(54 -11)">
          <Cap {...greyCap} />
        </g>
      </g>

      <g transform="translate(622 136) scale(0.3333)" stroke="#38ff38" strokeWidth="5" strokeLinejoin="round">
        <path d="M138 400 184 345 560 335 602 378 590 404 485 500 452 516H260L228 498 185 455Z" fill="#b6ffb6" />
        <path d="M138 376 184 345 205 402 185 455 138 400Z" fill="#9cfaac" />
        <path d="M185 455 205 402 250 430 228 498Z" fill="#a8f8bb" />
        <path d="M228 498 250 428 278 438 260 516Z" fill="#d5fde0" />
        <path d="M260 516 278 435 430 438 450 516Z" fill="#f0fff2" />
        <path d="M430 440 460 426 487 498 450 516Z" fill="#d8f9df" />
        <path d="M487 498 460 426 545 355 590 404Z" fill="url(#sunlit)" />
        <path d="M545 355 560 335 602 378 590 404Z" fill="#8cff8c" />
        <path d="M138 400 185 455 187 548 146 497Z" fill="#6bfa6b" />
        <path d="M185 455 228 498 232 595 187 548Z" fill="#62fa62" />
        <path d="M228 498 260 516 266 610 232 595Z" fill="#c3fcca" />
        <path d="M260 516H450L456 604 266 608Z" fill="#c8ffc8" />
        <path d="M450 516 487 498 494 597 456 604Z" fill="#b9f7c1" />
        <path d="M487 498 590 404 606 490 494 594Z" fill="#83ff83" />
        <path d="M138 376V400L146 497M602 378 606 490" fill="none" strokeWidth="7" />
        <g transform="translate(112 69)">
          <Cap {...greenCap} />
        </g>
        <path d="M498 424V474L508 466 518 480 526 474 518 462 530 456Z" fill="#454545" stroke="#f0f0f0" strokeWidth="3" />
      </g>
    </svg>
  );
}

function Annotations() {
  return (
    <div className="relative pl-4 pt-[47px] text-[36px] leading-[50px] whitespace-nowrap text-[#c9ac10]">
      <p>1. Change "size" and "length" in table "p"</p>
      <p>2. Select bottle shape here or here using doubleclick</p>
      <p className="mt-[49px]">3. Go ( File -&gt; Export ) to save STL file</p>
      <p>4. Print STL in vase mode</p>
    </div>
  );
}

function PointerArrows() {
  return (
    <svg width="1476" height="557" viewBox="0 0 1476 557" className="pointer-events-none absolute left-0 top-0" shapeRendering="crispEdges" fill="none" stroke="#cfae00" aria-hidden="true">
      <path d="M975 149.5 366 171.5" strokeWidth="5" />
      <path d="M335 172.5 363 165.5 365 178.500Z" strokeWidth="6" strokeLinejoin="round" />
      <path d="M334 172.5 356 167V178Z" fill="#cfae00" />
      <path d="M1121 147 1210 185" strokeWidth="6" />
      <path d="M1214 179.5 1226 193.5H1203.5Z" strokeWidth="6" strokeLinejoin="round" />
      <path d="M1216 186 1226 194H1216Z" fill="#cfae00" />
    </svg>
  );
}

function TreeView() {
  return (
    <div className="h-[326px] shrink-0 border border-[#b4b7b9] bg-[#fcfcfc]">
      <div className="flex h-5 bg-[#eff0f1]">
        <div className="flex w-[315px] border-b border-[#b4b7b9] bg-linear-to-b from-white to-[#eff0f1]">
          <span className="w-[215px] border-r border-[#c3c5c6] pl-0.5 leading-5">Labels &amp; Attributes</span>
          <span className="pl-0.5 leading-5">Description</span>
        </div>
      </div>
      <div role="tree" aria-label="Model tree" className="w-[315px]">
        <div role="treeitem" className="h-[18px] pl-[3px] leading-5">Application</div>
        <div role="treeitem" className="flex h-[19px] items-center gap-[9px] pl-1.5 font-bold">
          <Arrow dir="down" />
          <span className="flex items-center gap-1.5">
            <Svg>{icons.doc}</Svg>
            square_bottle
          </span>
        </div>
        {tree.map(row => (
          <div
            key={row.label}
            role="treeitem"
            aria-selected={!!row.selected}
            className={`flex h-[19px] items-center ${row.pad} ${row.selected ? "bg-[#3daee9] text-white" : row.muted ? "text-[#8c8e8f]" : ""}`}>
            <span className="flex w-[19px] items-center pl-0.5">
              <Arrow dir={row.arrow} color={row.selected ? "#1f5675" : undefined} />
            </span>
            <span className="flex items-center gap-1.5">
              <Svg>{icons[row.icon]}</Svg>
              {row.label}
            </span>
          </div>
        ))}
      </div>
    </div>
  );
}

function PropertyView() {
  return (
    <div className="min-h-0 flex-1 overflow-hidden border border-b-0 border-[#b4b7b9] p-px">
      <div className="h-full border border-b-0 border-[#b4b7b9] bg-[#fcfcfc]">
        <table className="w-full table-fixed border-separate border-spacing-0 text-left">
          <thead>
            <tr className="h-[22px] bg-linear-to-b from-white to-[#eceeee]">
              <th className="w-[100px] border-r border-b border-[#c3c5c6] p-0 pl-0.5 font-normal">Property</th>
              <th className="border-b border-[#c3c5c6] p-0 pl-0.5 font-normal">Value</th>
            </tr>
          </thead>
          <tbody>
            {properties.map(row =>
              row.group ? (
                <tr key={row.group} className="h-[22px] bg-[#787a79] text-white">
                  <th colSpan={2} className="border-b border-[#b9bbbb] p-0 pl-[23px] font-bold">{row.group}</th>
                </tr>
              ) : (
                <tr key={row.name} className="h-[22px] odd:bg-[#fcfcfc] even:bg-[#eff0f1]">
                  <td className="border-r border-b border-[#c3c5c6] p-0">
                    <span className="flex items-center">
                      <span className="w-[23px] pl-1.5">{row.expandable && <Arrow dir="right" />}</span>
                      {row.name}
                    </span>
                  </td>
                  <td className="border-b border-[#c3c5c6] p-0 pl-[3px] whitespace-pre">{row.value}</td>
                </tr>
              )
            )}
          </tbody>
        </table>
      </div>
    </div>
  );
}

function ComboView() {
  return (
    <aside className="flex w-[562px] shrink-0 flex-col bg-[#eff0f1]">
      <div className="flex h-5 shrink-0 items-center justify-between pr-0.5 pl-0.5">
        <span>Combo View</span>
        <span className="flex gap-[3px]">
          <button aria-label="Float">
            <Svg size={11}><rect x="1" y="1" width="14" height="14" rx="2" stroke="#555" strokeWidth="1.6" /><path d="M6 4H12V10H6ZM4 7H9V12H4Z" fill="#eff0f1" stroke="#555" strokeWidth="1.3" /></Svg>
          </button>
          <button aria-label="Close">
            <Svg size={11}><rect x="1" y="1" width="14" height="14" rx="2" stroke="#555" strokeWidth="1.6" /><path d="M4.5 4.5 11.5 11.5M11.5 4.5 4.5 11.5" stroke="#444" strokeWidth="2.4" /></Svg>
          </button>
        </span>
      </div>
      <div className="flex h-[27px] shrink-0 items-end border-b border-[#b4b7b9]" role="tablist">
        <button role="tab" aria-selected="true" className="-mb-px h-[27px] w-[59px] rounded-t-sm border-t border-r border-[#b4b7b9] bg-[#fcfcfc] pr-0.5">Model</button>
        <button role="tab" aria-selected="false" className="h-6 w-[54px] rounded-t-sm border-t border-r border-[#b4b7b9] bg-[#e6e7e7]">Tasks</button>
      </div>
      <div className="flex min-h-0 flex-1 flex-col border-r border-[#b4b7b9] bg-[#fcfcfc] pt-px pr-px">
        <TreeView />
        <div className="flex h-1 shrink-0 items-center justify-center">
          <span className="h-px w-4 bg-[repeating-linear-gradient(90deg,#aaa_0_1px,transparent_1px_3px)]" />
        </div>
        <PropertyView />
      </div>
    </aside>
  );
}

export default function App() {
  return (
    <div className="flex h-screen flex-col overflow-hidden bg-[#eff0f1] font-['Noto_Sans',sans-serif] text-xs text-[#232629]">
      <header className="relative flex h-[17px] shrink-0 justify-center overflow-hidden bg-linear-to-b from-[#4d565e] to-[#475057] pl-[438px] text-[#eff0f1]">
        <span className="absolute -top-1 left-0.5"><Svg size={20}>{icons.freecadLight}</Svg></span>
        <span className="text-[13px] leading-[6px]">FreeCAD 0.19 &lt;3&gt;</span>
      </header>

      <nav className="flex h-[21px] shrink-0 items-center">
        {menus.map(m => (
          <button key={m} className="pr-[7px] pl-2 leading-5">
            {noMnemonic.includes(m) ? m : <><span className="underline underline-offset-3">{m[0]}</span>{m.slice(1)}</>}
          </button>
        ))}
      </nav>

      <div className="flex h-[34px] shrink-0 items-center border-t border-b border-t-[#d0d2d3] border-b-[#b4b7b9] bg-linear-to-b from-[#fafbfc] to-[#eff0f1]">
        <span className="-ml-1 flex w-[14px]"><Handle /></span>
        <Tools items={fileBar} />
        <label className="relative flex h-[25px] w-[165px] shrink-0 items-center rounded-sm border border-[#b0b3b4] bg-linear-to-b from-[#fcfcfc] to-[#eeefef]">
          <span className="absolute left-1.5"><Svg>{icons.techDraw}</Svg></span>
          <select aria-label="Workbench" className="h-full w-full appearance-none bg-transparent pl-[25px]">
            <option>TechDraw</option>
          </select>
          <span className="pointer-events-none absolute right-1.5"><Arrow dir="down" /></span>
        </label>
        <Tools items={viewBar} />
      </div>

      <div className="flex h-[31px] shrink-0 items-center border-b border-[#b4b7b9] bg-linear-to-b from-[#fafbfc] to-[#eff0f1]">
        <span className="-ml-1 flex w-[14px]"><Handle /></span>
        <Tools items={drawBar} />
      </div>

      <div className="flex h-10 shrink-0 flex-col border-b border-[#b4b7b9] bg-linear-to-b from-[#fafbfc] to-[#eff0f1]">
        <div className="flex h-8 items-end">
          <span className="-ml-1 flex w-[15px]"><Handle /></span>
          <div className="flex flex-1 items-end border-b border-[#b4b7b9]">
            {workbenches.map(w => (
              <button
                key={w}
                aria-label={w}
                className={`flex w-11 shrink-0 items-center justify-center rounded-t-sm border-t border-r border-[#b4b7b9] pr-[3px] first:border-l ${w === "techDraw" ? "-mb-px h-7 bg-[#fcfcfc]" : "h-[25px] bg-[#e8e8e8]"}`}>
                <Svg>{icons[w]}</Svg>
              </button>
            ))}
          </div>
        </div>
      </div>

      <main className="relative mt-px flex min-h-0 flex-1">
        <ComboView />
        <div className="flex w-1.5 shrink-0 items-center justify-center">
          <span className="h-4 w-px bg-[repeating-linear-gradient(#aaa_0_1px,transparent_1px_3px)]" />
        </div>
        <section className="relative min-w-0 flex-1 overflow-hidden bg-linear-to-b from-[#333365] to-[#7d7d99]">
          <Scene />
          <Annotations />
        </section>
        <PointerArrows />
      </main>
    </div>
  );
}
